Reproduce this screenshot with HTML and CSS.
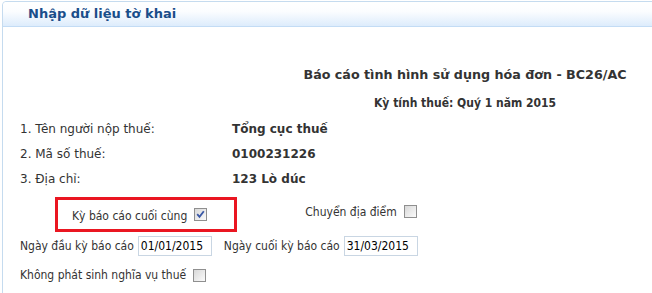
FILE: index.html
```html
<!DOCTYPE html>
<html>
<head>
    <title>Nhập dữ liệu tờ khai</title>
    <link rel="stylesheet" href="styles.css">
</head>
<body>
    <div class="panel">
        <div class="panel-head">Nhập dữ liệu tờ khai</div>

        <div class="panel-body">
            <div class="report-title">Báo cáo tình hình sử dụng hóa đơn - BC26/AC</div>
            <div class="report-period">Kỳ tính thuế: Quý 1 năm 2015</div>

            <div class="info-list">
                <div class="info-row">
                    <span class="info-label">1. Tên người nộp thuế:</span>
                    <span class="info-value">Tổng cục thuế</span>
                </div>
                <div class="info-row">
                    <span class="info-label">2. Mã số thuế:</span>
                    <span class="info-value">0100231226</span>
                </div>
                <div class="info-row">
                    <span class="info-label">3. Địa chỉ:</span>
                    <span class="info-value">123 Lò dúc</span>
                </div>
            </div>

            <div class="form-part">
                <div class="flag-row">
                    <label class="flag flag-marked">Kỳ báo cáo cuối cùng <span class="check checked"></span></label>
                    <label class="flag flag-move">Chuyển địa điểm <span class="check"></span></label>
                </div>

                <div class="date-row">
                    <label class="date-label">Ngày đầu kỳ báo cáo</label>
                    <input class="date-input" type="text" value="01/01/2015">
                    <label class="date-label date-end">Ngày cuối kỳ báo cáo</label>
                    <input class="date-input" type="text" value="31/03/2015">
                </div>

                <div class="flag-row flag-last">
                    <label class="flag">Không phát sinh nghĩa vụ thuế <span class="check"></span></label>
                </div>
            </div>
        </div>
    </div>
</body>
</html>
```

FILE: styles.css
```css
html {
    overflow: hidden;
}

body {
    font-family: "DejaVu Sans", Verdana, sans-serif;
    font-size: 12px;
    color: #333;
    background-color: #fff;
    margin: 1px 0 0 2px;
    padding: 0;
}

.panel {
    width: 907px;
    height: 300px;
    border: 1px solid #c5dbef;
    border-radius: 4px 4px 0 0;
}

.panel-head {
    height: 24px;
    line-height: 24px;
    padding-left: 25px;
    font-weight: bold;
    font-size: 13px;
    color: #1a4e8a;
    background: linear-gradient(#fff 0%, #fbfdff 40%, #ddecfc 100%);
    border-bottom: 1px solid #c3dcf5;
    border-radius: 4px 4px 0 0;
}

.panel-body {
    padding: 0 0 0 17px;
}

.report-title {
    margin-top: 39px;
    text-align: center;
    font-weight: bold;
    font-size: 12.7px;
    line-height: 18px;
}

.report-period {
    margin-top: 11px;
    text-align: center;
    font-family: "DejaVu Sans Condensed", "DejaVu Sans", sans-serif;
    font-weight: bold;
    line-height: 16px;
}

.info-list {
    margin-top: 6px;
}

.info-row {
    display: flex;
    height: 25px;
    line-height: 25px;
}

.info-label {
    width: 212px;
}

.info-value {
    font-weight: bold;
}

.form-part {
    font-family: "DejaVu Sans Condensed", "DejaVu Sans", sans-serif;
}

.flag-row {
    display: flex;
    align-items: center;
    margin-top: 5px;
}

.flag {
    display: flex;
    align-items: center;
    gap: 7px;
}

.flag-marked {
    border: 3px solid #ea1621;
    padding: 9px 27px 6px 14px;
    margin-left: 35px;
}

.flag-marked .check {
    margin-top: -3px;
}

.flag-move {
    margin-left: 68px;
    margin-top: -6px;
}

.check {
    display: inline-block;
    width: 11px;
    height: 11px;
    border: 1px solid #8f8f8f;
    background: linear-gradient(135deg, #d8d8d8, #fbfbfb);
}

.check.checked {
    background: url("data:image/svg+xml;utf8,<svg xmlns='http://www.w3.org/2000/svg' viewBox='0 0 11 11'><path d='M2.2 5.2 L4.5 7.8 L8.8 2.2' fill='none' stroke='%233a58a6' stroke-width='1.8'/></svg>"), linear-gradient(135deg, #d8d8d8, #fbfbfb);
}

.date-row {
    display: flex;
    align-items: center;
    margin-top: 4px;
}

.date-input {
    font-family: inherit;
    font-size: 12px;
    color: #000;
    width: 68px;
    height: 18px;
    padding: 0 2px;
    margin-left: 4px;
    border: 1px solid #c9d6e3;
    box-sizing: content-box;
}

.date-end {
    margin-left: 12px;
}

.flag-last {
    margin-top: 12px;
}
```
